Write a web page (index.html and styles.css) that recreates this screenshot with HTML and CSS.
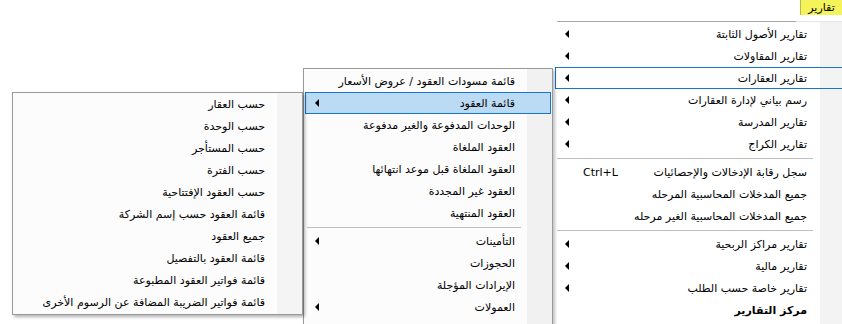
FILE: index.html
```html
<!DOCTYPE html>
<html lang="ar" dir="rtl">
<head>
  <meta charset="UTF-8" />
  <title>تقارير</title>
  <link rel="stylesheet" href="styles.css">
</head>
<body>
  <!-- Menubar tab -->
  <div class="menubar">
    <div class="tab">تقارير</div>
  </div>

  <!-- Main menu -->
  <ul class="menu main-menu">
    <li class="item">تقارير الأصول الثابتة<span class="arrow"></span></li>
    <li class="item">تقارير المقاولات<span class="arrow"></span></li>
    <li class="item open">تقارير العقارات<span class="arrow"></span></li>
    <li class="item">رسم بياني لإدارة العقارات<span class="arrow"></span></li>
    <li class="item">تقارير المدرسة<span class="arrow"></span></li>
    <li class="item">تقارير الكراج<span class="arrow"></span></li>
    <li class="sep"></li>
    <li class="item"><span class="label">سجل رقابة الإدخالات والإحصائيات</span><span class="shortcut">Ctrl+L</span></li>
    <li class="item">جميع المدخلات المحاسبية المرحله</li>
    <li class="item">جميع المدخلات المحاسبية الغير مرحله</li>
    <li class="sep"></li>
    <li class="item">تقارير مراكز الربحية<span class="arrow"></span></li>
    <li class="item">تقارير مالية<span class="arrow"></span></li>
    <li class="item">تقارير خاصة حسب الطلب<span class="arrow"></span></li>
    <li class="item bold">مركز التقارير</li>
  </ul>

  <!-- Submenu: تقارير العقارات -->
  <ul class="menu sub-menu">
    <li class="item">قائمة مسودات العقود / عروض الأسعار</li>
    <li class="item active">قائمة العقود<span class="arrow"></span></li>
    <li class="item">الوحدات المدفوعة والغير مدفوعة</li>
    <li class="item">العقود الملغاة</li>
    <li class="item">العقود الملغاة قبل موعد انتهائها</li>
    <li class="item">العقود غير المجددة</li>
    <li class="item">العقود المنتهية</li>
    <li class="sep"></li>
    <li class="item">التأمينات<span class="arrow"></span></li>
    <li class="item">الحجوزات</li>
    <li class="item">الإيرادات المؤجلة</li>
    <li class="item">العمولات<span class="arrow"></span></li>
  </ul>

  <!-- Submenu: قائمة العقود -->
  <ul class="menu third-menu">
    <li class="item">حسب العقار</li>
    <li class="item">حسب الوحدة</li>
    <li class="item">حسب المستأجر</li>
    <li class="item">حسب الفترة</li>
    <li class="item">حسب العقود الإفتتاحية</li>
    <li class="item">قائمة العقود حسب إسم الشركة</li>
    <li class="item">جميع العقود</li>
    <li class="item">قائمة العقود بالتفصيل</li>
    <li class="item">قائمة فواتير العقود المطبوعة</li>
    <li class="item">قائمة فواتير الضريبة المضافة عن الرسوم الأخرى</li>
  </ul>
</body>
</html>
```

FILE: styles.css
```css
* {
  margin: 0; padding: 0; box-sizing: border-box;
}

body {
  width: 842px;
  height: 324px;
  overflow: hidden;
  position: relative;
  background: #fff;
  color: #000;
  font-family: "DejaVu Sans", Tahoma, sans-serif;
  font-size: 11px;
}

.menubar {
  height: 21px;
  display: flex;
  justify-content: flex-start;
}

.tab {
  width: 42px;
  height: 15px;
  background: #f4f45a;
  border-left: 1px solid #b8b84a;
  text-align: center;
  line-height: 15px;
}

/* popup menus */
.menu {
  position: absolute;
  list-style: none;
  display: flex;
  flex-direction: column;
}

.item {
  height: 22px;
  display: flex;
  align-items: center;
  border: 1px solid transparent;
  white-space: nowrap;
}

.item.bold {
  font-weight: bold;
}

.arrow {
  margin-right: auto;
  width: 0;
  height: 0;
  border-top: 4px solid transparent;
  border-bottom: 4px solid transparent;
  border-right: 4px solid #000;
}

.shortcut {
  margin-right: auto;
  padding-left: 18px;
  direction: ltr;
}

.sep {
  height: 6px;
  display: flex;
  align-items: center;
}

.sep::after {
  content: "";
  flex: 1;
  height: 1px;
  background: #bdbdbd;
}

.main-menu {
  left: 553px;
  top: 21px;
  width: 300px;
  height: 310px;
  padding-top: 2px;
  background:
    linear-gradient(to right, #fff 4px, #a8a8a8 4px, #a8a8a8 243px, #e4e4e4 243px) top / 100% 1px no-repeat,
    linear-gradient(to right, #fff 267px, #f3f3f3 267px);
}

.main-menu .item {
  padding: 0 45px 0 9px;
  margin-left: 2px;
}

.main-menu .sep::after {
  margin: 0 40px 0 4px;
}

.main-menu .item.open {
  border-color: #1677d2;
}

.sub-menu {
  left: 303px;
  top: 68px;
  width: 250px;
  height: 270px;
  padding: 1px;
  border: 1px solid #9a9a9a;
  background: linear-gradient(to right, #fcfcfc 223px, #f1f1f1 223px);
  box-shadow: 2px 2px 3px rgba(0, 0, 0, 0.25);
}

.sub-menu .item {
  padding: 0 35px 0 9px;
}

.sub-menu .item.active {
  background: #bbdaf4;
  border-color: #1677d2;
}

.sub-menu .sep::after {
  margin: 0 30px 0 2px;
}

.third-menu {
  left: 12px;
  top: 92px;
  width: 291px;
  height: 223px;
  padding: 1px;
  border: 1px solid #9a9a9a;
  background: linear-gradient(to right, #fcfcfc 264px, #f4f4f4 264px);
  box-shadow: 2px 2px 3px rgba(0, 0, 0, 0.3);
}

.third-menu .item {
  padding: 0 35px 0 9px;
}
```
